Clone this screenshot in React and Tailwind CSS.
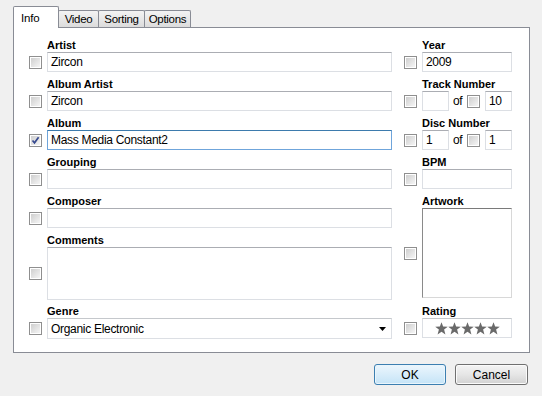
import React from 'react';

const Check = ({ checked }) => (
  <div className="w-[13px] h-[13px] shrink-0 border border-[#8f8f8f] bg-white p-px">
    <div className="relative w-full h-full bg-linear-to-br from-[#cfcfcf] to-[#f5f5f5]">
      {checked && (
        <svg viewBox="0 0 9 9" className="absolute inset-0 w-full h-full">
          <path d="M1.5 4.5 L3.5 6.8 L7.6 1.2" fill="none" stroke="#36498f" strokeWidth="1.7" />
        </svg>
      )}
    </div>
  </div>
);

const Label = ({ children }) => (
  <div className="h-[13px] pl-[18px] text-[11px] leading-[13px] font-bold text-black whitespace-nowrap">{children}</div>
);

const Box = ({ value, className = '', focused }) => (
  <div
    className={
      'h-[20px] flex items-center px-[3px] text-[12px] tracking-[-0.3px] text-black bg-white border ' +
      (focused ? 'border-[#6fa5db] border-t-[#3d7bad] ' : 'border-[#dcdfe4] border-t-[#abadb3] ') +
      className
    }
  >
    {value}
  </div>
);

const Field = ({ label, value, checked, focused, mb = 'mb-[6px]' }) => (
  <div className={mb}>
    <Label>{label}</Label>
    <div className="flex items-center gap-[5px]">
      <Check checked={checked} />
      <Box value={value} focused={focused} className="flex-1" />
    </div>
  </div>
);

const Star = () => (
  <svg viewBox="0 0 12 12" className="w-[13px] h-[13px]">
    <polygon points="6,0.2 7.5,4.2 11.8,4.4 8.4,7 9.6,11.5 6,8.9 2.4,11.5 3.6,7 0.2,4.4 4.5,4.2" fill="#6a6a6a" />
  </svg>
);

const tabs = ['Video', 'Sorting', 'Options'];

export default function App() {
  return (
    <div className="w-[542px] h-[396px] bg-[#f0f0f0] font-['Liberation_Sans',Arial,sans-serif] text-black">
      <div className="pl-[13px] pt-[6px]">
        {/* tabs */}
        <div className="flex items-end h-[21px]">
          <div className="relative z-10 -mb-px h-[22px] w-[46px] bg-white border border-b-0 border-[#898c95] rounded-t-[2px] pl-[7px] pt-[3px] text-[11.5px] tracking-[-0.2px]">
            Info
          </div>
          {tabs.map((t, i) => (
            <div
              key={t}
              className={
                'h-[17px] border border-b-0 border-[#898c95] rounded-t-[2px] bg-linear-to-b from-[#f3f3f3] to-[#dcdcdc] text-[11.5px] tracking-[-0.3px] leading-[16px] text-center ' +
                (i === 0 ? 'w-[41px] -ml-px' : 'w-[47px] -ml-px')
              }
            >
              {t}
            </div>
          ))}
        </div>

        {/* panel */}
        <div className="w-[517px] h-[326px] bg-white border border-[#898c95] pl-[15px] pt-[11px] flex gap-[12px]">
          {/* left column */}
          <div className="w-[363px]">
            <Field label="Artist" value="Zircon" />
            <Field label="Album Artist" value="Zircon" />
            <Field label="Album" value="Mass Media Constant2" checked focused />
            <Field label="Grouping" value="" />
            <Field label="Composer" value="" />
            <div className="mb-[5px]">
              <Label>Comments</Label>
              <div className="flex items-center gap-[5px]">
                <Check />
                <div className="flex-1 h-[53px] bg-white border border-[#dcdfe4] border-t-[#abadb3]" />
              </div>
            </div>
            <div>
              <Label>Genre</Label>
              <div className="flex items-center gap-[5px]">
                <Check />
                <div className="flex-1 h-[21px] flex items-center justify-between pl-[3px] pr-[5px] text-[12px] tracking-[-0.3px] bg-white border border-[#dcdfe4] border-t-[#c5c8cc]">
                  <span>Organic Electronic</span>
                  <svg viewBox="0 0 7 4" className="w-[7px] h-[4px]">
                    <polygon points="0,0 7,0 3.5,4" fill="#000" />
                  </svg>
                </div>
              </div>
            </div>
          </div>

          {/* right column */}
          <div className="w-[108px]">
            <Field label="Year" value="2009" />
            <div className="mb-[6px]">
              <Label>Track Number</Label>
              <div className="flex items-center">
                <Check />
                <Box value="" className="ml-[5px] w-[27px]" />
                <span className="ml-[4px] w-[14px] text-[12px] tracking-[-0.3px]">of</span>
                <Check />
                <Box value="10" className="ml-[5px] w-[27px]" />
              </div>
            </div>
            <div className="mb-[6px]">
              <Label>Disc Number</Label>
              <div className="flex items-center">
                <Check />
                <Box value="1" className="ml-[5px] w-[27px]" />
                <span className="ml-[4px] w-[14px] text-[12px] tracking-[-0.3px]">of</span>
                <Check />
                <Box value="1" className="ml-[5px] w-[27px]" />
              </div>
            </div>
            <Field label="BPM" value="" />
            <div className="mb-[7px]">
              <Label>Artwork</Label>
              <div className="flex items-center gap-[5px]">
                <Check />
                <div className="flex-1 h-[90px] bg-white border border-[#d8d8d8] border-t-[#7a7a7a] border-l-[#8a8a8a]" />
              </div>
            </div>
            <div>
              <Label>Rating</Label>
              <div className="flex items-center gap-[5px]">
                <Check />
                <div className="flex-1 h-[20px] flex items-center justify-center bg-white border border-[#dcdfe4] border-t-[#c5c8cc]">
                  <Star />
                  <Star />
                  <Star />
                  <Star />
                  <Star />
                </div>
              </div>
            </div>
          </div>
        </div>
      </div>

      {/* buttons */}
      <div className="flex justify-end gap-[9px] pr-[14px] pt-[11px]">
        <button className="w-[72px] h-[21px] rounded-[3px] border border-[#3c7fb1] bg-linear-to-b from-[#ecf6fd] to-[#c5e4f7] text-[12px] shadow-[inset_0_0_0_1px_#e9f5fc]">
          OK
        </button>
        <button className="w-[73px] h-[21px] rounded-[3px] border border-[#707070] bg-linear-to-b from-[#f4f4f4] via-[#e6e6e6] to-[#d2d2d2] text-[12px] shadow-[inset_0_0_0_1px_#fbfbfb]">
          Cancel
        </button>
      </div>
    </div>
  );
}
